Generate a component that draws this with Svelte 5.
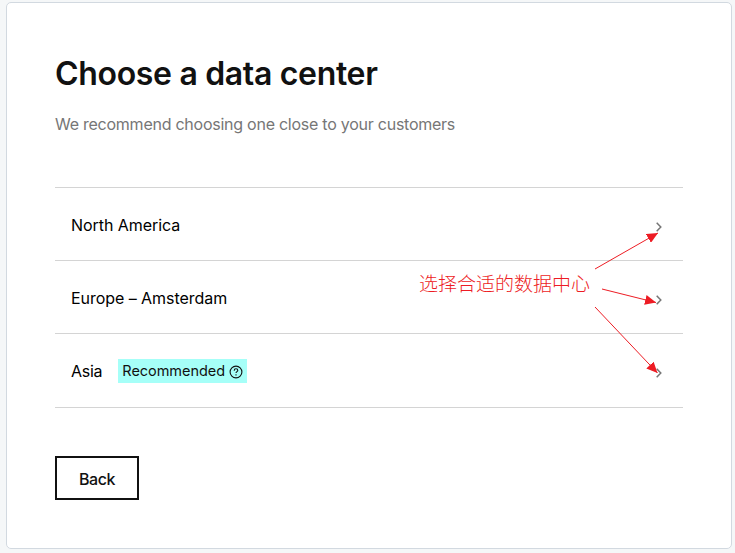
<script lang="ts">
	type Center = { name: string; recommended?: boolean };

	const centers: Center[] = [
		{ name: 'North America' },
		{ name: 'Europe – Amsterdam' },
		{ name: 'Asia', recommended: true }
	];

	// shaft start and arrow tip, in page pixels
	const arrows = [
		{ x1: 595, y1: 269, x2: 658, y2: 233 },
		{ x1: 602, y1: 289, x2: 656, y2: 302.5 },
		{ x1: 595, y1: 307, x2: 657.5, y2: 373 }
	];
</script>

<main class="card">
	<h1>Choose a data center</h1>
	<p class="hint">We recommend choosing one close to your customers</p>

	<ul class="centers">
		{#each centers as center}
			<li class:last={center.recommended}>
				<span class="name">{center.name}</span>
				{#if center.recommended}
					<span class="tag">
						<span class="tag-text">Recommended</span>
						<svg class="help" width="14" height="14" viewBox="0 0 14 14">
							<circle cx="7" cy="7" r="5.9" />
							<path d="M5.2 5.7c0-1.2.8-1.9 1.8-1.9s1.8.7 1.8 1.6c0 1.2-1.8 1.3-1.8 2.6" />
							<path d="M7 9.2v1.2" />
						</svg>
					</span>
				{/if}
				<svg class="chevron" width="6" height="10" viewBox="0 0 6 10">
					<path d="M.7.7 4.8 5 .7 9.3" />
				</svg>
			</li>
		{/each}
	</ul>

	<button class="back">Back</button>
</main>

<span class="note">选择合适的数据中心</span>
<svg class="arrows" width="735" height="553" viewBox="0 0 735 553">
	<defs>
		<marker
			id="head"
			markerUnits="userSpaceOnUse"
			markerWidth="12"
			markerHeight="10"
			refX="11"
			refY="5"
			orient="auto"
		>
			<path d="M0 0 11 5 0 10z" />
		</marker>
	</defs>
	{#each arrows as a}
		<line x1={a.x1} y1={a.y1} x2={a.x2} y2={a.y2} marker-end="url(#head)" />
	{/each}
</svg>

<style>
	:global(body) {
		background: #f5f7f8;
		overflow: hidden;
	}

	:global(#app) {
		display: flow-root;
	}

	.card {
		box-sizing: border-box;
		width: 726px;
		height: 547px;
		margin: 2px 0 0 6px;
		padding: 48px;
		border: 1px solid #d2d9e0;
		border-radius: 5px;
		background: #fff;
		color: #111;
		font-family: Inter, 'Liberation Sans', sans-serif;
		font-size: 16px;
		line-height: 24px;
	}

	h1 {
		margin: 0;
		padding-top: 1px;
		font-size: 32px;
		font-weight: 600;
		line-height: 44px;
		letter-spacing: -0.33px;
		white-space: nowrap;
	}

	.hint {
		margin: 16px 0 0;
		color: #767676;
		letter-spacing: -0.25px;
		white-space: nowrap;
	}

	.centers {
		margin: 51px 0 0;
		padding: 0;
		list-style: none;
		border-top: 1px solid #d4d4d4;
	}

	li {
		display: flex;
		align-items: center;
		box-sizing: border-box;
		height: 73px;
		padding: 2px 21px 0 16px;
		border-bottom: 1px solid #d4d4d4;
		color: #000;
	}

	.name {
		letter-spacing: -0.05px;
	}

	li.last {
		height: 74px;
		padding: 1px 21px 1px 16px;
	}

	.last .name {
		letter-spacing: -0.25px;
	}

	.tag {
		display: flex;
		align-items: center;
		box-sizing: border-box;
		width: 129px;
		height: 24px;
		margin-left: 16px;
		padding: 0 4px;
		justify-content: space-between;
		background: #a6fff8;
		color: #111;
		font-size: 14.5px;
		letter-spacing: -0.05px;
	}

	.tag-text {
		padding-top: 1px;
	}

	.help,
	.chevron {
		fill: none;
		stroke: #111;
		stroke-width: 1.1;
	}

	.help {
		margin-top: 3px;
	}

	.chevron {
		margin: 4px 0 0 auto;
		stroke: #767676;
		stroke-width: 1.5;
	}

	.back {
		display: block;
		width: 84px;
		height: 44px;
		margin: 48px 0 0;
		padding: 2px 0 0;
		border: 2px solid #111;
		background: #fff;
		color: #111;
		font: inherit;
		font-weight: 500;
		letter-spacing: -0.5px;
	}

	.note {
		position: absolute;
		left: 419px;
		top: 269px;
		color: #ed1c24;
		font: 300 19px/28px 'Noto Sans CJK SC', sans-serif;
		white-space: nowrap;
	}

	.arrows {
		position: absolute;
		left: 0;
		top: 0;
		pointer-events: none;
	}

	.arrows line {
		stroke: #ed1c24;
		stroke-width: 1;
	}

	.arrows marker path {
		fill: #ed1c24;
	}
</style>
